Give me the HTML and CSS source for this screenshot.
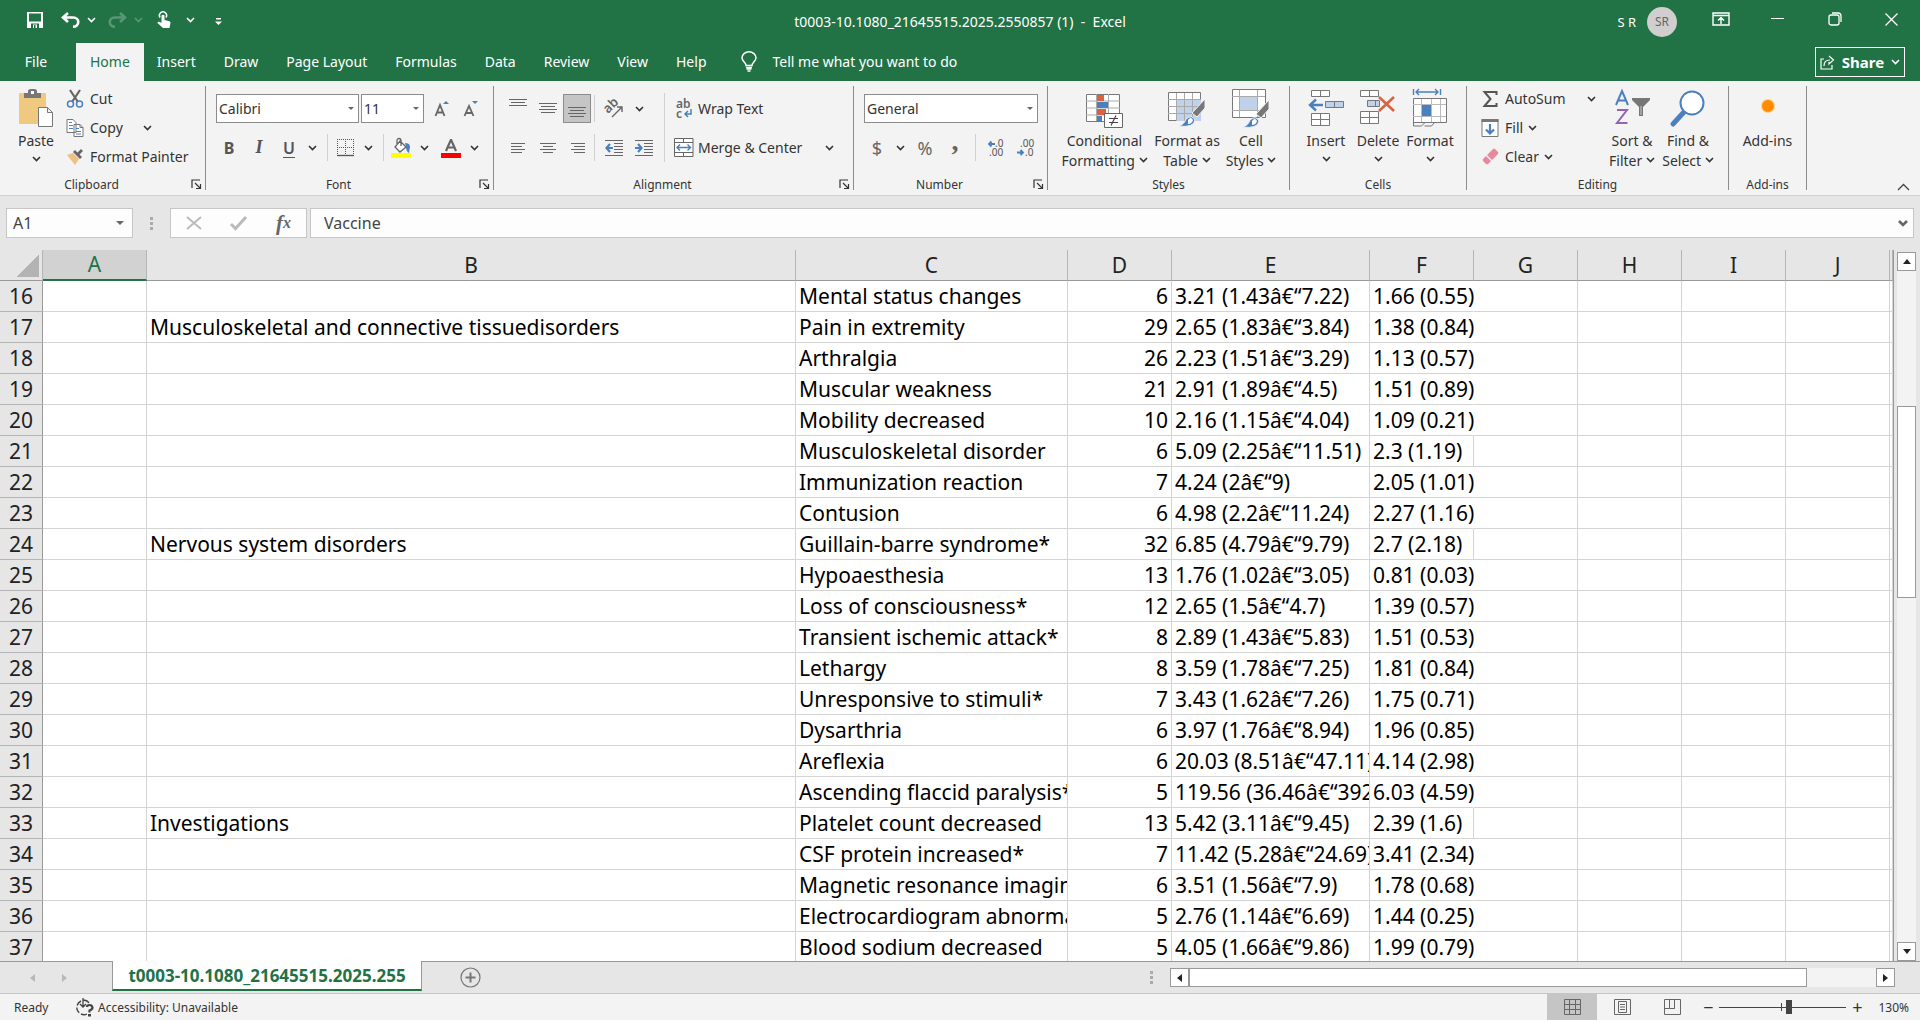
FILE: index.html
```html
<!DOCTYPE html>
<html lang="en">
<head>
<meta charset="UTF-8">
<meta name="viewport" content="width=device-width, initial-scale=1.0">
<title>t0003-10.1080_21645515.2025.2550857 (1) - Excel</title>
<link rel="stylesheet" href="styles.css">
</head>

<body>

<svg class="defs" aria-hidden="true">
<symbol id="chev" viewBox="0 0 9 6"><path d="M1 1l3.500 3.500L8 1" fill="none" stroke="currentColor" stroke-width="1.600"/></symbol>
<symbol id="launch" viewBox="0 0 11 11"><path d="M1 9V1h8M4 4l5 5M9.500 5v4.500H5" fill="none" stroke="#333" stroke-width="1.200"/></symbol>
</svg>

<!-- TITLE BAR -->
<header class="titlebar">
<div class="quick">
<button class="q-save" aria-label="Save"><svg width="16" height="16" viewBox="0 0 16 16"><path d="M0 0h16v16H0z" fill="#fff"/><path d="M2 1.500h12v8H2zM4 11.500h8V16H4z" fill="#217346"/><path d="M6 12.500h4V16H6z" fill="#fff"/><path d="M7 13h1.500v3H7z" fill="#217346"/></svg></button>
<button class="q-undo" aria-label="Undo"><svg width="19" height="16" viewBox="0 0 19 16"><path d="M7 1L2 5.500l5 4.500M2.500 5.500H12c7 0 7 9 0 9.300" fill="none" stroke="#fff" stroke-width="2.600"/></svg></button>
<button class="q-chev" aria-label="Undo list"><svg class="chev"><use href="#chev"/></svg></button>
<button class="q-undo faded" aria-label="Redo"><svg width="19" height="16" viewBox="0 0 19 16"><path d="M12 1l5 4.500-5 4.500M16.500 5.500H7c-7 0-7 9 0 9.300" fill="none" stroke="#fff" stroke-width="2.600"/></svg></button>
<button class="q-chev faded" aria-label="Redo list"><svg class="chev"><use href="#chev"/></svg></button>
<button class="q-touch" aria-label="Touch/Mouse mode"><svg width="14" height="18" viewBox="0 0 14 18"><path d="M3 6.500A3.600 3.600 0 1 1 9 6.500" fill="none" stroke="#fff" stroke-width="1.500"/><path d="M4.500 4.500q1.500-1.500 3 0V9l5 1.200q1 .5 1 1.500L12.500 17H6l-5.500-5q0-1.500 1.500-1.300l2.500 1z" fill="#fff"/></svg></button>
<button class="q-chev" aria-label="Touch list"><svg class="chev"><use href="#chev"/></svg></button>
<button class="q-more" aria-label="Customize toolbar"><svg width="7" height="8" viewBox="0 0 7 8"><path d="M1 0h5v1.500H1zM0 3.500h7L3.500 7z" fill="#fff"/></svg></button>
</div>
<div class="doc-name">t0003-10.1080_21645515.2025.2550857 (1)&nbsp; -&nbsp; Excel</div>
<div class="window-side">
<span class="user">S R</span>
<span class="avatar">SR</span>
<button class="win" aria-label="Ribbon display options"><svg width="18" height="14" viewBox="0 0 18 14"><path d="M1 1h16v12H1zM1 3.500h16M9 12V6M6 8.500l3-3 3 3" fill="none" stroke="#fff" stroke-width="1.400"/></svg></button>
<button class="win" aria-label="Minimize"><svg width="13" height="14" viewBox="0 0 13 14"><path d="M0 6.500h13" stroke="#fff"/></svg></button>
<button class="win" aria-label="Restore"><svg width="14" height="14" viewBox="0 0 14 14"><rect x="1" y="3" width="10" height="10" rx="2" fill="none" stroke="#fff" stroke-width="1.300"/><path d="M4 1h6q3 0 3 3v6" fill="none" stroke="#fff" stroke-width="1.300"/></svg></button>
<button class="win" aria-label="Close"><svg width="13" height="13" viewBox="0 0 13 13"><path d="M.5.5l12 12M12.500.5l-12 12" stroke="#fff" stroke-width="1.300"/></svg></button>
</div>
</header>

<!-- TABS -->
<nav class="tabs">
<button class="file">File</button>
<button class="on">Home</button>
<button>Insert</button>
<button>Draw</button>
<button>Page Layout</button>
<button>Formulas</button>
<button>Data</button>
<button>Review</button>
<button>View</button>
<button>Help</button>
<button class="tell"><svg width="16" height="21" viewBox="0 0 16 21"><path d="M5 14.500c0-3-4-4-4-7.700a7 6 0 0 1 14 0c0 3.700-4 4.700-4 7.700z" fill="none" stroke="#fff" stroke-width="1.500"/><path d="M5 16.500h6M5.500 18h5M6.500 20h3" stroke="#fff" stroke-width="1.500"/></svg>Tell me what you want to do</button>
<button class="share"><svg width="15" height="15" viewBox="0 0 15 15"><path d="M4 4H1v10h11v-4M4 11c0-4 2-6 6-6M9 1l4.500 4L9 9V7" fill="none" stroke="#fff" stroke-width="1.200"/></svg><span>Share</span><svg class="chev"><use href="#chev"/></svg></button>
</nav>

<!-- RIBBON -->
<div class="ribbon">

<section class="group clipboard">
<div class="body">
<button class="big paste"><span class="pic"><svg width="36" height="40" viewBox="0 0 36 40"><rect x="1" y="5" width="27" height="31" rx="1" fill="#eec97f"/><path d="M6 5h4V3q0-2 3-2h3q3 0 3 2v2h4v5H6z" fill="#777"/><rect x="13" y="3" width="3" height="3" fill="#fff"/><path d="M20.500 19.500h9l5 5v14h-14zM29.500 19.500v5h5" fill="#fff" stroke="#777"/></svg></span>Paste<svg class="chev"><use href="#chev"/></svg></button>
<div class="stack">
<button class="line"><svg width="18" height="20" viewBox="0 0 18 20"><path d="M4 1l8 12M14 1L6 13" stroke="#666" stroke-width="2.200"/><circle cx="4.500" cy="15" r="3" fill="none" stroke="#4a80bd" stroke-width="1.500"/><circle cx="13.500" cy="15" r="3" fill="none" stroke="#4a80bd" stroke-width="1.500"/></svg>Cut</button>
<button class="line"><svg width="18" height="20" viewBox="0 0 18 20"><path d="M1 1.500h6l3 3v10H1zM8 6.500h6l3 3v9H8z" fill="#fff" stroke="#777"/><path d="M14 6.500v3h3" fill="none" stroke="#777"/><path d="M3 4.500h3M3 7.500h4M3 10.500h4M10 10.500h3M10 13.500h5M10 16h5" stroke="#4a80bd"/></svg>Copy<svg class="chev far"><use href="#chev"/></svg></button>
<button class="line"><svg width="18" height="20" viewBox="0 0 18 20"><path d="M1 8l6-2 6 6-4 6z" fill="#eec082"/><path d="M7 5l7 7 2-2-2.500-2.500L17 4l-2-2-3.500 3.500L9 3z" fill="#666"/></svg>Format Painter</button>
</div>
</div>
<div class="label">Clipboard<button aria-label="Clipboard settings"><svg><use href="#launch"/></svg></button></div>
</section>
<span class="divider"></span>

<section class="group font">
<div class="body two">
<div class="row">
<span class="pick face"><select aria-label="Font"><option>Calibri</option></select></span>
<span class="pick size"><select aria-label="Font size"><option>11</option></select></span>
<button class="tool grow" aria-label="Increase font size"><svg width="16" height="20" viewBox="0 0 16 20"><path d="M1.500 17L6 6l4.500 11M3 13.500h6" fill="none" stroke="#666" stroke-width="1.800"/><path d="M9 5l3-3 3 3z" fill="#4a80bd"/></svg></button>
<button class="tool" aria-label="Decrease font size"><svg width="16" height="20" viewBox="0 0 16 20"><path d="M1.500 17L6 7l4.500 10M3 14h6" fill="none" stroke="#666" stroke-width="1.800"/><path d="M9 2l3 3 3-3z" fill="#4a80bd"/></svg></button>
</div>
<div class="row">
<button class="tool spaced b">B</button>
<button class="tool spaced i">I</button>
<button class="tool u">U</button>
<button class="drop" aria-label="Underline list"><svg class="chev"><use href="#chev"/></svg></button>
<span class="sep"></span>
<button class="tool" aria-label="Borders"><svg width="17" height="18" viewBox="0 0 17 18"><path d="M0 .5h17M.5 0v17M8.500 0v17M16.500 0v17M0 8.500h17" stroke="#555" stroke-dasharray="1 1"/><path d="M0 16.500h17" stroke="#555" stroke-width="1.300"/></svg></button>
<button class="drop" aria-label="Border list"><svg class="chev"><use href="#chev"/></svg></button>
<span class="sep"></span>
<button class="tool" aria-label="Fill color"><svg width="20" height="20" viewBox="0 0 20 20"><path d="M9 3l6 6-6 5-5-5zM6 7V3q0-2.500 2-2.500T10 3v5" fill="#fff" stroke="#666" stroke-width="1.300"/><path d="M14 5q5 0 5 4l-1 6q-3-2-3-6z" fill="#4a80bd"/><path d="M0 15h20v5H0z" fill="#ff0"/></svg></button>
<button class="drop" aria-label="Fill color list"><svg class="chev"><use href="#chev"/></svg></button>
<button class="tool inkbtn" aria-label="Font color"><svg width="20" height="20" viewBox="0 0 20 20"><path d="M5 13l4.800-11h.4L15 13M6.500 9.500h7" fill="none" stroke="#666" stroke-width="2.200"/><path d="M0 15h20v5H0z" fill="#f00"/></svg></button>
<button class="drop" aria-label="Font color list"><svg class="chev"><use href="#chev"/></svg></button>
</div>
</div>
<div class="label">Font<button aria-label="Font settings"><svg><use href="#launch"/></svg></button></div>
</section>
<span class="divider"></span>

<section class="group alignment">
<div class="body">
<div class="two">
<div class="row">
<button class="al" aria-label="Top align"><svg width="18" height="27" viewBox="0 0 18 27"><path d="M0 4.500h18M2 7.500h14M0 10.500h18" stroke="#666"/></svg></button>
<button class="al" aria-label="Middle align"><svg width="18" height="27" viewBox="0 0 18 27"><path d="M0 8.500h18M2 11.500h14M0 14.500h18M2 17.500h14" stroke="#666"/></svg></button>
<button class="al pressed" aria-label="Bottom align"><svg width="18" height="27" viewBox="0 0 18 27"><path d="M0 12.500h18M2 15.500h14M0 18.500h18M2 21.500h14" stroke="#666"/></svg></button>
<span class="sep"></span>
<button class="al" aria-label="Orientation"><svg width="20" height="20" viewBox="0 0 20 20"><text x="4" y="15" transform="rotate(-45 4 15)" font-size="13" font-weight="600" fill="#666">ab</text><path d="M8 18L18 8M13 8h5v5" fill="none" stroke="#666" stroke-width="1.400"/></svg></button>
<button class="drop" aria-label="Orientation list"><svg class="chev"><use href="#chev"/></svg></button>
</div>
<div class="row">
<button class="al" aria-label="Align left"><svg width="14" height="12" viewBox="0 0 14 12"><path d="M0 1.500h14M0 4.500h11M0 7.500h14M0 10.500h11" stroke="#666"/></svg></button>
<button class="al" aria-label="Center"><svg width="16" height="12" viewBox="0 0 16 12"><path d="M0 1.500h16M3 4.500h10M0 7.500h16M3 10.500h10" stroke="#666"/></svg></button>
<button class="al" aria-label="Align right"><svg width="14" height="12" viewBox="0 0 14 12"><path d="M0 1.500h14M3 4.500h11M0 7.500h14M3 10.500h11" stroke="#666"/></svg></button>
<span class="sep"></span>
<button class="al" aria-label="Decrease indent"><svg width="18" height="18" viewBox="0 0 18 18"><path d="M0 1.500h18M9 4.500h9M9 7.500h9M9 10.500h9M9 13.500h9M0 16.500h18" stroke="#666"/><path d="M1 9h7M5 5L1.500 9 5 13" fill="none" stroke="#4a80bd" stroke-width="2.200"/></svg></button>
<button class="al" aria-label="Increase indent"><svg width="18" height="18" viewBox="0 0 18 18"><path d="M0 1.500h18M9 4.500h9M9 7.500h9M9 10.500h9M9 13.500h9M0 16.500h18" stroke="#666"/><path d="M0 9h7M3 5l3.500 4L3 13" fill="none" stroke="#4a80bd" stroke-width="2.200"/></svg></button>
</div>
</div>
<span class="sep tall"></span>
<div class="two wide">
<button class="line"><svg width="20" height="20" viewBox="0 0 20 20"><text x="2" y="9" font-size="12" font-weight="600" fill="#666">ab</text><text x="2" y="19" font-size="12" font-weight="600" fill="#666">c</text><path d="M17 10v5h-6M14 12l-3 3 3 3" fill="none" stroke="#4a80bd" stroke-width="1.500"/></svg>Wrap Text</button>
<button class="line"><svg width="20" height="20" viewBox="0 0 20 20"><path d="M.5.500h18.500v18H.5zM.5 4.500H19M.5 14.500H19M9.500.5v4M9.500 14.500v4" fill="#fff" stroke="#666"/><path d="M3 9.500h13.500M6 6.500l-3 3 3 3M13.500 6.500l3 3-3 3" fill="none" stroke="#4a80bd" stroke-width="1.400"/></svg>Merge &amp; Center<svg class="chev end"><use href="#chev"/></svg></button>
</div>
</div>
<div class="label">Alignment<button aria-label="Alignment settings"><svg><use href="#launch"/></svg></button></div>
</section>
<span class="divider"></span>

<section class="group number">
<div class="body two">
<div class="row"><span class="pick format"><select aria-label="Number format"><option>General</option></select></span></div>
<div class="row">
<button class="tool sym">$</button>
<button class="drop" aria-label="Currency list"><svg class="chev"><use href="#chev"/></svg></button>
<button class="al sym">%</button>
<button class="al sym comma">,</button>
<span class="sep"></span>
<button class="al" aria-label="Increase decimal"><svg width="17" height="18" viewBox="0 0 17 18"><text x="8" y="8" font-size="10" fill="#555">.0</text><text x="2" y="17" font-size="10" fill="#555">.00</text><path d="M8 5H2M4.500 2.500L2 5l2.500 2.500" fill="none" stroke="#4a80bd" stroke-width="1.800"/></svg></button>
<button class="al" aria-label="Decrease decimal"><svg width="17" height="18" viewBox="0 0 17 18"><text x="3" y="8" font-size="10" fill="#555">.00</text><text x="8" y="17" font-size="10" fill="#555">.0</text><path d="M0 13.500h6M3.500 11L6 13.500 3.500 16" fill="none" stroke="#4a80bd" stroke-width="1.800"/></svg></button>
</div>
</div>
<div class="label">Number<button aria-label="Number settings"><svg><use href="#launch"/></svg></button></div>
</section>
<span class="divider"></span>

<section class="group styles">
<div class="body">
<button class="big w-cond"><span class="pic"><svg width="37" height="40" viewBox="0 0 37 40"><path d="M.5 6.500h33v27H.5z" fill="#fff" stroke="#777"/><path d="M0 13h34M0 20h34M0 27h34M10.500 6v27M22.500 6v27" stroke="#aaa"/><path d="M11 7h7v6h-7zM11 21h9v6h-9z" fill="#d9623f"/><path d="M11 14h11v6H11zM11 28h5v5h-5z" fill="#4a80bd"/><path d="M18.500 25.500h18v14h-18z" fill="#fff" stroke="#666"/><path d="M23 30.500h9M23 34.500h9M30 27.500l-5 10" stroke="#444" stroke-width="1.200"/></svg></span>Conditional<br>Formatting <svg class="chev"><use href="#chev"/></svg></button>
<button class="big w-table"><span class="pic"><svg width="38" height="40" viewBox="0 0 38 40"><path d="M.5 4.500h32v28H.5z" fill="#fff" stroke="#777"/><path d="M9 12h24v21H9z" fill="#bfd2e9"/><path d="M0 11.500h33M0 18.500h33M0 25.500h33M8.500 5v28M16.500 5v28M24.500 5v28" stroke="#aaa"/><path d="M37 11v9l-8 9-5-4z" fill="#777" stroke="#f3f3f3"/><path d="M10 38q6-1 8-7 6-5 9 1-1 8-17 6z" fill="#4a80bd" stroke="#f3f3f3"/><path d="M20 32q3-4 5 0-1 4-5 4z" fill="#fff"/></svg></span>Format as<br>Table <svg class="chev"><use href="#chev"/></svg></button>
<button class="big w-cell"><span class="pic"><svg width="38" height="40" viewBox="0 0 38 40"><path d="M.5 1.500h33v28H.5z" fill="#fff" stroke="#777"/><path d="M0 8.500h33M0 22.500h33M7.500 2v27M25.500 2v27" stroke="#aaa"/><path d="M8 9h17v13H8z" fill="#bfd2e9"/><path d="M37 12v9l-8 9-5-4z" fill="#777" stroke="#f3f3f3"/><path d="M10 39q6-1 8-7 6-5 9 1-1 8-17 6z" fill="#4a80bd" stroke="#f3f3f3"/><path d="M20 33q3-4 5 0-1 4-5 4z" fill="#fff"/></svg></span>Cell<br>Styles <svg class="chev"><use href="#chev"/></svg></button>
</div>
<div class="label plain">Styles</div>
</section>
<span class="divider"></span>

<section class="group cells">
<div class="body">
<button class="big"><span class="pic"><svg width="36" height="38" viewBox="0 0 36 38"><path d="M3.500 1.500h18v6h-18zM12.500 1.500v6M3.500 24.500h18v12h-18zM12.500 24.500v12M3.500 30.500h18" fill="#fff" stroke="#777"/><path d="M17.500 12.500h18v6h-18zM26.500 12.500v6" fill="#bfd2e9" stroke="#777"/><path d="M15 16H3M8 10.500L2 16l6 5.500" fill="none" stroke="#4a80bd" stroke-width="2.400"/></svg></span>Insert<svg class="chev"><use href="#chev"/></svg></button>
<button class="big"><span class="pic"><svg width="36" height="38" viewBox="0 0 36 38"><path d="M.5 1.500h18v6H.5zM9.500 1.500v6M.5 22.500h18v12H.5zM9.500 22.500v12M.5 28.500h18" fill="#fff" stroke="#777"/><path d="M7.500 11.500h12v6h-12zM15.500 11.500v6" fill="#bfd2e9" stroke="#777"/><path d="M19 8l15 14M34 8L19 22" stroke="#d9623f" stroke-width="2.600"/></svg></span>Delete<svg class="chev"><use href="#chev"/></svg></button>
<button class="big"><span class="pic"><svg width="34" height="38" viewBox="0 0 34 38"><path d="M.5 0v6M27.500 0v6M3 3h22M6 0L3 3l3 3M22 0l3 3-3 3" fill="none" stroke="#4a80bd" stroke-width="1.400"/><path d="M.5 9.500h33v24H.5z" fill="#fff" stroke="#777"/><path d="M0 15.500h33M0 27.500h33M8.500 10v23M18.500 10v23M27.500 10v23" stroke="#bbb"/><path d="M9 16h9v11H9z" fill="#4a80bd"/><path d="M.5 33v4h8l3-3M11.500 37h7l3-3.500" fill="none" stroke="#777"/></svg></span>Format<svg class="chev"><use href="#chev"/></svg></button>
</div>
<div class="label plain">Cells</div>
</section>
<span class="divider"></span>

<section class="group editing">
<div class="body">
<div class="stack">
<button class="line"><svg width="18" height="20" viewBox="0 0 18 20"><path d="M15.500 6V3H3.500l6 7-6 7h12v-3" fill="none" stroke="#555" stroke-width="2"/></svg>AutoSum<svg class="chev end"><use href="#chev"/></svg></button>
<button class="line"><svg width="18" height="20" viewBox="0 0 18 20"><path d="M1 1.500h16v17H1z" fill="#fff" stroke="#777"/><path d="M.5 1h17v3H.5z" fill="#777"/><path d="M9 6v10M5 11.500l4 4 4-4" fill="none" stroke="#4a80bd" stroke-width="2.200"/></svg>Fill<svg class="chev near"><use href="#chev"/></svg></button>
<button class="line"><svg width="18" height="20" viewBox="0 0 18 20"><path d="M6 8l6-6q1-.8 2 0l3 3q.8 1 0 2l-6 6zM5 9l5 5-3 3q-1 .8-2 0l-3-3q-.8-1 0-2z" fill="#e8889b"/></svg>Clear<svg class="chev near"><use href="#chev"/></svg></button>
</div>
<button class="big"><span class="pic"><svg width="36" height="40" viewBox="0 0 36 40"><path d="M2 17L8 3l6 14M4.500 12.500h7" fill="none" stroke="#4a80bd" stroke-width="2"/><path d="M3 22h10L3 35h10.500" fill="none" stroke="#9463b5" stroke-width="2"/><path d="M18 10h18v2l-7 7v9h-4v-9l-7-7z" fill="#777"/><path d="M27 18v9" stroke="#ccc"/></svg></span>Sort &amp;<br>Filter <svg class="chev"><use href="#chev"/></svg></button>
<button class="big"><span class="pic"><svg width="36" height="38" viewBox="0 0 36 38"><path d="M3 35l11-12" stroke="#4a80bd" stroke-width="5" stroke-linecap="round"/><circle cx="22" cy="14" r="11.500" fill="#fff" stroke="#4a80bd" stroke-width="2"/></svg></span>Find &amp;<br>Select <svg class="chev"><use href="#chev"/></svg></button>
</div>
<div class="label plain">Editing</div>
</section>
<span class="divider"></span>

<section class="group addins">
<div class="body">
<button class="big"><span class="pic"><svg width="20" height="40" viewBox="0 0 20 40"><circle cx="10" cy="18" r="7" fill="#ffcf8a"/><circle cx="10" cy="18" r="6" fill="#ff8c00"/></svg></span>Add-ins</button>
</div>
<div class="label plain">Add-ins</div>
</section>
<span class="divider"></span>
<button class="collapse" aria-label="Collapse the ribbon"><svg width="13" height="8" viewBox="0 0 13 8"><path d="M1 7l5.500-5.500L12 7" fill="none" stroke="#444" stroke-width="1.300"/></svg></button>
</div>

<!-- FORMULA BAR -->
<div class="formula">
<div class="namebox"><input aria-label="Name box" value="A1"><i class="tri"></i></div>
<i class="grip"></i>
<div class="fx">
<button aria-label="Cancel"><svg width="16" height="14" viewBox="0 0 16 14"><path d="M1 1l14 12M15 1L1 13" stroke="#bbb" stroke-width="2"/></svg></button>
<button aria-label="Enter"><svg width="17" height="14" viewBox="0 0 17 14"><path d="M1 8l4.500 4.500L16 1" fill="none" stroke="#bbb" stroke-width="3"/></svg></button>
<button class="fn" aria-label="Insert function">f<sub>x</sub></button>
</div>
<div class="entry"><input aria-label="Formula" value="Vaccine"><svg width="10" height="7" viewBox="0 0 10 7"><path d="M1 1l4 4 4-4" fill="none" stroke="#666" stroke-width="2.600"/></svg></div>
</div>

<!-- SHEET -->
<main class="book">
<div class="grid">
<table id="sheet">
<colgroup><col class="c-head"><col class="c-std"><col class="c-b"><col class="c-c"><col class="c-std"><col class="c-e"><col class="c-std"><col class="c-std"><col class="c-std"><col class="c-std"><col class="c-std"><col></colgroup>
<thead>
<tr><th class="corner"></th><th class="sel">A</th><th>B</th><th>C</th><th>D</th><th>E</th><th>F</th><th>G</th><th>H</th><th>I</th><th>J</th><th></th></tr>
</thead>
<tbody></tbody>
</table>
</div>
<div class="vscroll">
<button aria-label="Scroll up"><i class="arrow up"></i></button>
<span class="v-before"></span>
<span class="v-thumb"></span>
<span class="v-after"></span>
<button aria-label="Scroll down"><i class="arrow down"></i></button>
</div>
</main>

<!-- SHEET TABS -->
<div class="sheets">
<button class="nav" aria-label="Previous sheet"><i class="arrow left"></i></button>
<button class="nav" aria-label="Next sheet"><i class="arrow right"></i></button>
<button class="sheet-tab">t0003-10.1080_21645515.2025.255</button>
<button class="plus" aria-label="New sheet"><svg width="21" height="21" viewBox="0 0 21 21"><circle cx="10.500" cy="10.500" r="9.500" fill="none" stroke="#777" stroke-width="1.200"/><path d="M10.500 5.500v10M5.500 10.500h10" stroke="#777" stroke-width="2"/></svg></button>
<i class="grip"></i>
<div class="hscroll">
<button aria-label="Scroll left"><i class="arrow left"></i></button>
<span class="h-thumb"></span>
<span class="h-after"></span>
<button aria-label="Scroll right"><i class="arrow right"></i></button>
</div>
</div>

<!-- STATUS BAR -->
<footer class="status">
<span class="ready">Ready</span>
<button class="access"><svg width="20" height="19" viewBox="0 0 20 19"><path d="M6 3a7 7 0 1 0 6 13" fill="none" stroke="#444" stroke-width="1.400" stroke-dasharray="6 2"/><path d="M8 0v8M5 6l3 3 3-3M8 2q4 0 6 3" fill="none" stroke="#444" stroke-width="1.300"/><path d="M12 9q0-2 2.500-2T17.500 9.500q0 2-3 3v2" fill="none" stroke="#444" stroke-width="2.200"/><path d="M13 16h3v2.500h-3z" fill="#444"/></svg>Accessibility: Unavailable</button>
<button class="view on" aria-label="Normal view"><svg width="17" height="16" viewBox="0 0 17 16"><path d="M.5.500h16v15H.5zM.5 5.500h16M.5 10.500h16M5.500.5v15M11.500.5v15" fill="none" stroke="#666"/></svg></button>
<button class="view" aria-label="Page layout view"><svg width="17" height="16" viewBox="0 0 17 16"><path d="M.5.500h16v15H.5zM4.500 2.500h8v11h-8zM6 5.500h5M6 8h5M6 10.500h5" fill="none" stroke="#666"/></svg></button>
<button class="view" aria-label="Page break view"><svg width="17" height="16" viewBox="0 0 17 16"><path d="M.5.500h16v15H.5zM5.500.5v9h5v-9M.5 9.500h5M10.500 9.500v-9" fill="none" stroke="#666"/></svg></button>
<button class="zoom" aria-label="Zoom out">−</button>
<input class="slider" type="range" min="10" max="250" value="143" aria-label="Zoom">
<button class="zoom" aria-label="Zoom in">+</button>
<span class="pct">130%</span>
</footer>

<script>
/* first row number on screen, then B, C, D, E, F */
const first = 16;
const rows = [
["", "Mental status changes", 6, "3.21 (1.43â€“7.22)", "1.66 (0.55)"],
["Musculoskeletal and connective tissuedisorders", "Pain in extremity", 29, "2.65 (1.83â€“3.84)", "1.38 (0.84)"],
["", "Arthralgia", 26, "2.23 (1.51â€“3.29)", "1.13 (0.57)"],
["", "Muscular weakness", 21, "2.91 (1.89â€“4.5)", "1.51 (0.89)"],
["", "Mobility decreased", 10, "2.16 (1.15â€“4.04)", "1.09 (0.21)"],
["", "Musculoskeletal disorder", 6, "5.09 (2.25â€“11.51)", "2.3 (1.19)"],
["", "Immunization reaction", 7, "4.24 (2â€“9)", "2.05 (1.01)"],
["", "Contusion", 6, "4.98 (2.2â€“11.24)", "2.27 (1.16)"],
["Nervous system disorders", "Guillain-barre syndrome*", 32, "6.85 (4.79â€“9.79)", "2.7 (2.18)"],
["", "Hypoaesthesia", 13, "1.76 (1.02â€“3.05)", "0.81 (0.03)"],
["", "Loss of consciousness*", 12, "2.65 (1.5â€“4.7)", "1.39 (0.57)"],
["", "Transient ischemic attack*", 8, "2.89 (1.43â€“5.83)", "1.51 (0.53)"],
["", "Lethargy", 8, "3.59 (1.78â€“7.25)", "1.81 (0.84)"],
["", "Unresponsive to stimuli*", 7, "3.43 (1.62â€“7.26)", "1.75 (0.71)"],
["", "Dysarthria", 6, "3.97 (1.76â€“8.94)", "1.96 (0.85)"],
["", "Areflexia", 6, "20.03 (8.51â€“47.11)", "4.14 (2.98)"],
["", "Ascending flaccid paralysis*", 5, "119.56 (36.46â€“392)", "6.03 (4.59)"],
["Investigations", "Platelet count decreased", 13, "5.42 (3.11â€“9.45)", "2.39 (1.6)"],
["", "CSF protein increased*", 7, "11.42 (5.28â€“24.69)", "3.41 (2.34)"],
["", "Magnetic resonance imaging", 6, "3.51 (1.56â€“7.9)", "1.78 (0.68)"],
["", "Electrocardiogram abnormal", 5, "2.76 (1.14â€“6.69)", "1.44 (0.25)"],
["", "Blood sodium decreased", 5, "4.05 (1.66â€“9.86)", "1.99 (0.79)"]
];

let body = document.querySelector("#sheet tbody");
let html = "";
rows.forEach((r,i)=>{
let spill = r[4].length > 10 ? " class='spill'" : "";
html += `<tr><th>${first + i}</th><td></td><td>${r[0]}</td><td>${r[1]}</td><td class="num">${r[2]}</td><td>${r[3]}</td><td${spill}>${r[4]}</td><td></td><td></td><td></td><td></td><td></td></tr>`;
});
body.innerHTML = html;
</script>

</body>
</html>
```
FILE: styles.css
```css
*{
box-sizing:border-box;
}

body{
margin:0;
height:100vh;
display:flex;
flex-direction:column;
overflow:hidden;
font-family:"Noto Sans","Open Sans",sans-serif;
font-size:14px;
color:#333;
background:#e6e6e6;
}

button,input,select{
font:inherit;
color:inherit;
}

button{
display:flex;
align-items:center;
justify-content:center;
padding:0;
border:none;
background:none;
white-space:nowrap;
}

svg{
flex:none;
overflow:visible;
}

.defs{
position:absolute;
width:0;
height:0;
}

.chev{
width:9px;
height:6px;
}

/* TITLE BAR */
.titlebar{
display:grid;
grid-template-columns:1fr auto 1fr;
height:43px;
flex:none;
background:#217346;
color:white;
}

.quick{
display:flex;
align-items:center;
padding:0 0 4px 20px;
}

.quick button{height:30px;}
.q-save{width:30px;}
.q-undo{width:40px;}
.q-chev{width:15px;margin-left:-6px;}
.q-undo + .q-chev{margin-right:-7px;}
.quick .q-undo:nth-child(4){margin-left:5px;}
.q-touch{width:50px;}
.q-more{width:40px;padding-top:5px;}
.faded{opacity:.25;}

.doc-name{
line-height:43px;
}

.window-side{
display:flex;
align-items:center;
justify-content:flex-end;
}

.user{
font-size:13px;
margin-right:11px;
}

.avatar{
width:30px;
height:30px;
border-radius:50%;
background:#d0cece;
color:#666;
font-size:12px;
line-height:30px;
text-align:center;
margin-right:15px;
}

.win{
width:57px;
height:38px;
align-self:flex-start;
}

/* TABS */
.tabs{
display:flex;
height:38px;
flex:none;
background:#217346;
color:white;
padding-right:15px;
}

.tabs button{
padding:0 14px 2px;
}

.tabs .file{
width:76px;
padding:0 30px 2px 26px;
}

.tabs .on{
background:#f3f3f3;
color:#217346;
}

.tabs .on + button{
margin-left:-1px;
}

.tabs .tell{
gap:16px;
margin-left:6px;
}

.tabs .share{
margin-left:auto;
margin-top:4px;
width:90px;
height:30px;
padding:0;
gap:7px;
border:1px solid white;
font-size:15px;
font-weight:bold;
}

/* RIBBON */
.ribbon{
display:flex;
height:115px;
flex:none;
background:#f3f3f3;
border-bottom:1px solid #d0d0d0;
}

.group{
display:flex;
flex-direction:column;
justify-content:space-between;
flex:none;
}

.divider{
width:1px;
margin:5px 0;
background:#8c8c8c;
}

.body{
display:flex;
align-items:flex-start;
padding-top:3px;
}

.label{
display:flex;
justify-content:center;
position:relative;
height:20px;
line-height:20px;
font-size:12px;
padding-right:22px;
}

.label.plain{
padding-right:0;
}

.label button{
position:absolute;
right:3px;
top:4px;
}

.label svg{
width:11px;
height:11px;
}

.clipboard{width:205px;}
.font{width:287px;}
.alignment{width:359px;}
.number{width:193px;}
.styles{width:241px;}
.cells{width:176px;}
.editing{width:261px;}
.addins{width:77px;}

.big{
display:block;
line-height:20px;
text-align:center;
}

.big .pic{
display:flex;
align-items:center;
justify-content:center;
height:47px;
}

.big .chev{
margin-bottom:3px;
}

.paste,.cells .big{
display:flex;
flex-direction:column;
justify-content:flex-start;
}

.paste .chev,.cells .chev{
margin-top:5px;
}

.paste{width:66px;padding-left:6px;}
.cells .body{padding-left:10px;}
.cells .big{width:52px;}
.w-cond{width:93px;margin-left:10px;}
.w-table{width:72px;}
.w-cell{width:56px;}
.addins .big{width:77px;}

.line{
height:29px;
justify-content:flex-start;
}

.line svg:first-child{
margin-right:6px;
}

.line .far{margin-left:20px;}
.line .near{margin-left:5px;}
.line .end{margin-left:auto;}

.two{
display:flex;
flex-direction:column;
gap:10px;
padding-top:13px;
}

.row{
display:flex;
align-items:center;
height:29px;
}

.sep{
width:1px;
height:27px;
background:#d0d0d0;
margin:0 4px 0 5px;
}

.sep.tall{
height:69px;
margin:8px 9px 0 0;
}

.tool{width:26px;height:28px;}
.spaced{margin-right:4px;}
.inkbtn{margin-left:4px;}
.drop{width:20px;height:28px;}

.al{
width:30px;
height:29px;
}

.pressed{
width:28px;
border:1px solid #8c8c8c;
background:#c5c5c5;
}

.b{font-weight:bold;font-size:16px;color:#555;}
.i{font-family:"Liberation Serif",serif;font-style:italic;font-weight:bold;font-size:18px;color:#555;}
.u{font-weight:600;font-size:16px;text-decoration:underline;text-underline-offset:3px;color:#555;}

.pick{
position:relative;
display:block;
}

.pick select{
display:block;
width:100%;
height:29px;
padding:0 2px;
border:1px solid #8c8c8c;
border-radius:0;
background:white;
appearance:none;
}

.pick::after{
content:"";
position:absolute;
right:5px;
top:13px;
border:3px solid transparent;
border-top-color:#666;
border-bottom:none;
}

.font .body,.number .body{padding-left:10px;}
.face{width:143px;margin-right:2px;}
.size{width:63px;}
.grow{margin:0 3px 0 5px;}
.format{width:174px;}

.alignment .body{padding:4px 0 0 9px;}
.alignment .body > .two{padding-top:9px;}
.alignment .body > .two:first-child{width:161px;}
.alignment .row{padding-left:0;}
.alignment .row .sep{margin-left:3px;}
.alignment .row:nth-child(2) .sep{margin-left:1px;}
.alignment .wide{width:160px;align-items:stretch;}
.wide .line svg:first-child{margin-right:4px;}

.sym{font-size:18px;color:#666;}
.comma{font-family:"Liberation Serif",serif;font-weight:bold;font-size:28px;padding-bottom:14px;}

.editing .body{padding-left:14px;}
.editing .stack{width:115px;}
.editing .stack .line{width:115px;}
.editing .stack .line svg:first-child{margin-right:6px;}
.editing .stack + .big{margin-left:8px;}
.editing .big{width:56px;}

.collapse{
margin:98px 10px 0 auto;
height:16px;
}

/* FORMULA BAR */
.formula{
display:flex;
align-items:center;
flex:none;
height:54px;
padding:0 6px;
font-size:16px;
color:#444;
}

.namebox,.fx,.entry{
display:flex;
align-items:center;
height:30px;
background:#fdfdfd;
border:1px solid #c6c6c6;
}

.formula input{
flex:1;
min-width:0;
border:none;
background:none;
padding:0;
}

.namebox{
width:127px;
padding:0 8px 0 6px;
}

.tri{
border:4px solid transparent;
border-top-color:#666;
border-bottom:none;
}

.grip{
width:3px;
height:13px;
background:repeating-linear-gradient(#aaa 0 3px,transparent 3px 5px);
}

.formula .grip{
margin:0 17px;
}

.fx{
width:137px;
margin-right:3px;
}

.fx button{
flex:1;
}

.fn{
font-family:"Liberation Serif",serif;
font-style:italic;
font-weight:bold;
font-size:21px;
color:#666;
}

.fn sub{
font-size:16px;
line-height:0;
}

.entry{
flex:1;
padding:0 5px 0 13px;
}

/* SHEET */
.book{
flex:1;
min-height:0;
display:flex;
}

.grid{
flex:1;
min-width:0;
overflow:hidden;
border-right:1px solid #999;
}

table{
width:100%;
table-layout:fixed;
border-collapse:separate;
border-spacing:0;
background:white;
font-size:21px;
color:#000;
}

.c-head{width:43px;}
.c-std{width:104px;}
.c-b{width:649px;}
.c-c{width:272px;}
.c-e{width:198px;}

th,td{
height:31px;
padding:0 3px;
line-height:30px;
overflow:hidden;
white-space:nowrap;
text-align:left;
border-right:1px solid #d4d4d4;
border-bottom:1px solid #d4d4d4;
}

th{
padding:0;
font-weight:normal;
text-align:center;
color:#222;
background:#e6e6e6;
border-right-color:#999;
border-bottom-color:#999;
}

thead th{
line-height:29px;
border-right-color:#b5b5b5;
}

tbody th{
border-bottom-color:#b5b5b5;
}

.corner{
background:linear-gradient(135deg,#e6e6e6 50%,#b3b3b3 50%) 16px 4px / 23px 23px no-repeat #e6e6e6;
}

.sel{
background:#d2d2d2;
color:#217346;
border-bottom:2px solid #217346;
}

.num{
text-align:right;
}

.spill{
overflow:visible;
border-right-color:transparent;
}

/* SCROLLBARS */
.vscroll{
display:flex;
flex-direction:column;
width:19px;
margin:2px 4px 0 3px;
background:#f3f3f3;
}

.vscroll button,.hscroll button{
width:19px;
height:19px;
flex:none;
background:white;
border:1px solid #999;
}

.v-before{flex:136;}
.v-thumb{flex:190;background:white;border:1px solid #999;}
.v-after{flex:346;}

.arrow{
border:4px solid transparent;
}

.up{border-bottom:5px solid #222;border-top:none;}
.down{border-top:5px solid #222;border-bottom:none;}
.left{border-right:5px solid #222;border-left:none;}
.right{border-left:5px solid #222;border-right:none;}

/* SHEET TABS */
.sheets{
display:flex;
align-items:center;
height:33px;
flex:none;
border-top:1px solid #999;
border-bottom:1px solid #c6c6c6;
padding-right:25px;
}

.nav{
width:32px;
height:28px;
}

.nav:first-child{margin-left:16px;}
.nav .left{border-right-color:#b8b8b8;}
.nav .right{border-left-color:#b8b8b8;}

.sheet-tab{
width:310px;
height:30px;
margin:-1px 38px 0 32px;
align-self:flex-start;
background:white;
border-left:1px solid #999;
border-right:1px solid #999;
border-bottom:2px solid #217346;
color:#217346;
font-size:17px;
font-weight:bold;
}

.sheets .grip{
margin:0 17px 0 auto;
}

.hscroll{
display:flex;
width:725px;
height:19px;
background:#f3f3f3;
}

.h-thumb{flex:618;background:white;border:1px solid #999;}
.h-after{flex:69;}

/* STATUS BAR */
.status{
display:flex;
align-items:center;
height:26px;
flex:none;
background:#f3f3f3;
font-size:12px;
padding-right:11px;
}

.ready{
width:75px;
padding-left:14px;
}

.access{
gap:3px;
margin-right:auto;
}

.view{
width:50px;
height:26px;
}

.view.on{
background:#c5c5c5;
}

.zoom{
width:22px;
font-size:18px;
}

.slider{
appearance:none;
width:127px;
height:14px;
margin:0;
background:linear-gradient(#444,#444) 0 7px / 100% 1px no-repeat,linear-gradient(#444,#444) 62px 3px / 1px 8px no-repeat;
}

.slider::-webkit-slider-thumb{
appearance:none;
width:6px;
height:14px;
background:#444;
}

.pct{
margin-left:10px;
}
```
